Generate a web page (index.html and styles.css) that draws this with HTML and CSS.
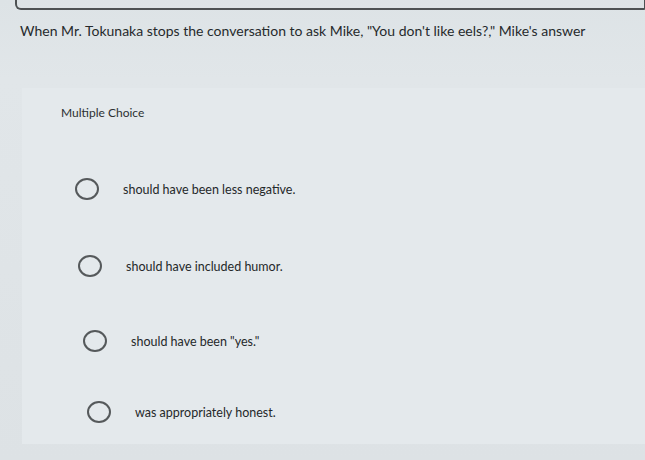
FILE: index.html
```html
<!DOCTYPE html>
<html>
<head>
<meta charset="utf-8">
<link rel="stylesheet" href="styles.css">
</head>
<body>
<div class="page">
  <div class="topbox"></div>
  <p class="question">When Mr. Tokunaka stops the conversation to ask Mike, "You don't like eels?," Mike's answer</p>
  <div class="panel">
    <div class="label">Multiple Choice</div>
    <ul class="options">
      <li class="opt o1"><span class="radio"></span><span class="otext">should have been less negative.</span></li>
      <li class="opt o2"><span class="radio"></span><span class="otext">should have included humor.</span></li>
      <li class="opt o3"><span class="radio"></span><span class="otext">should have been "yes."</span></li>
      <li class="opt o4"><span class="radio"></span><span class="otext">was appropriately honest.</span></li>
    </ul>
  </div>
</div>
</body>
</html>
```
FILE: styles.css
```css
html, body {
  margin: 0;
  padding: 0;
}
body {
  width: 645px;
  height: 460px;
  overflow: hidden;
  background: #d9dfe2;
  font-family: Lato, "Open Sans", Arial, sans-serif;
  color: #262a2c;
}
.page {
  height: 460px;
  background: linear-gradient(#dde3e6, #e1e6e9 80px, #dde2e5);
}
.topbox {
  margin-left: 15px;
  width: 627px;
  height: 8px;
  border: 2px solid #4d5153;
  border-top: none;
  border-radius: 0 0 3px 6px;
}
.question {
  margin: 0;
  padding: 12px 0 0 20px;
  font-size: 14px;
  line-height: 18px;
  letter-spacing: 0;
}
.panel {
  margin: 48px 0 0 22px;
  height: 356px;
  background: #e4e9ec;
  padding: 17px 0 0 39px;
  box-sizing: border-box;
}
.label {
  font-size: 12px;
  line-height: 16px;
  color: #2c3032;
}
.options {
  list-style: none;
  margin: 0;
  padding: 0;
}
.opt {
  display: flex;
  align-items: center;
  height: 22px;
}
.o1 { margin: 57px 0 0 14px; }
.o2 { margin: 55px 0 0 17px; }
.o3 { margin: 53px 0 0 22px; }
.o4 { margin: 49px 0 0 26px; }
.radio {
  width: 20px;
  height: 18px;
  border: 2px solid #55595b;
  border-radius: 50%;
  flex: none;
}
.otext {
  margin-left: 24px;
  font-size: 12.5px;
  color: #24282a;
}
```
